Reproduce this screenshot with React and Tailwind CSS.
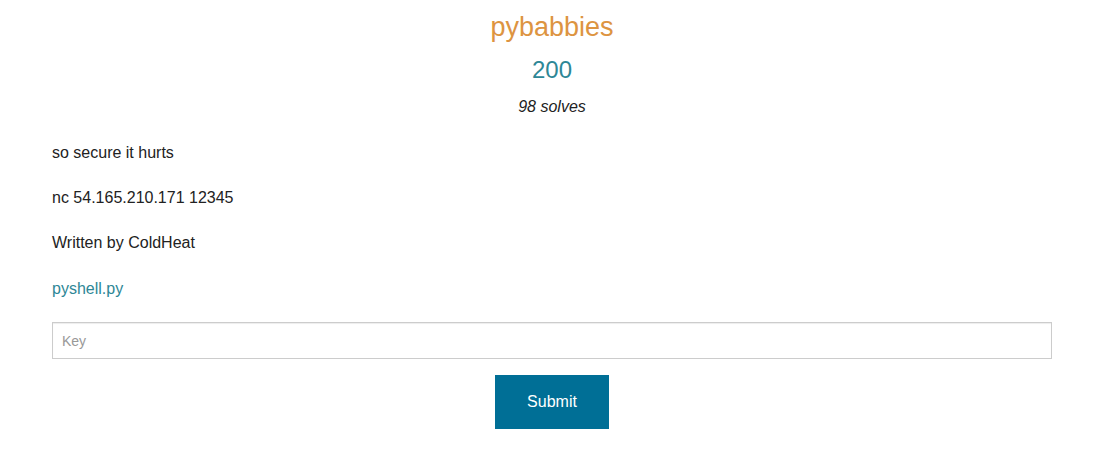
export default function App() {
  return (
    <div className="min-h-screen bg-white font-['Liberation_Sans',Arial,sans-serif] text-[#222]">
      <div className="mx-auto w-[1000px] pt-[10px]">
        {/* Header */}
        <div className="text-center">
          <h1 className="text-[27px] leading-[34px] text-[#dd9441]">pybabbies</h1>
          <h2 className="mt-[11px] text-[24px] leading-[30px] text-[#2e8796]">200</h2>
          <p className="mt-[12px] text-[16px] leading-[20px] italic text-[#222]">98 solves</p>
        </div>

        {/* Description */}
        <div className="mt-[25px] text-[16px] leading-[22px]">
          <p>so secure it hurts</p>
          <p className="mt-[23px]">nc 54.165.210.171 12345</p>
          <p className="mt-[23px]">Written by ColdHeat</p>
          <p className="mt-[24px]">
            <a href="#" className="text-[#2e8796]">pyshell.py</a>
          </p>
        </div>

        {/* Form */}
        <div className="mt-[22px]">
          <input
            type="text"
            placeholder="Key"
            className="block h-[37px] w-full border border-[#cccccc] px-[9px] text-[14px] text-[#333] placeholder:text-[#999] shadow-[inset_0_1px_1px_rgba(0,0,0,0.075)] outline-none"
          />
          <div className="mt-[16px] flex justify-center">
            <button className="h-[54px] w-[114px] bg-[#006f96] text-[16px] text-white">
              Submit
            </button>
          </div>
        </div>
      </div>
    </div>
  );
}
